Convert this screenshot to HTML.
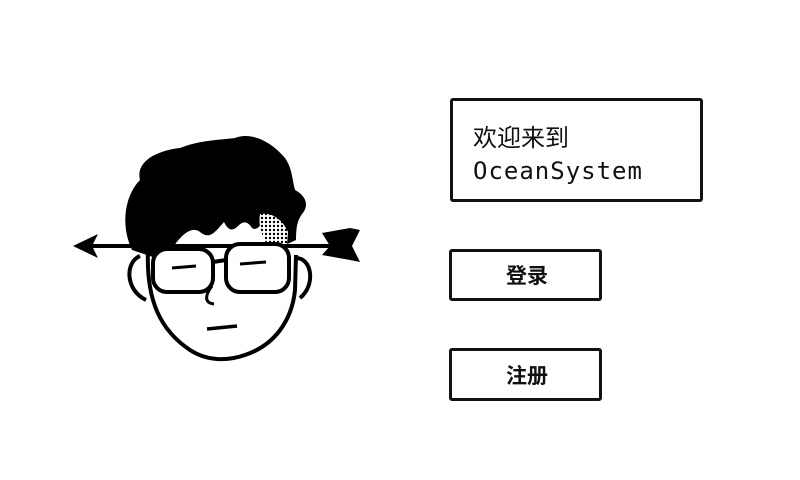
<!DOCTYPE html>
<html><head><meta charset="utf-8"><style>
html,body{margin:0;padding:0;background:#fff;width:800px;height:480px;overflow:hidden;position:relative}
.box{position:absolute;border:3px solid #111;border-radius:3px;box-sizing:border-box;background:#fff}
.t{position:absolute;color:#111}
</style></head><body>
<svg width="800" height="480" style="position:absolute;left:0;top:0">
<defs><pattern id="dots" width="4" height="4" patternUnits="userSpaceOnUse"><rect width="4" height="4" fill="#fff"/><circle cx="2" cy="2" r="1.2" fill="#000"/></pattern></defs>
<path d="M148 250 C146 300 160 330 190 350 C205 360 225 362 245 355 C275 345 292 320 295 290 L296 255" fill="#fff" stroke="#000" stroke-width="4"/>
<path d="M140 256 C125 262 125 290 146 300" fill="none" stroke="#000" stroke-width="4"/>
<path d="M296 258 C312 258 316 285 300 298" fill="none" stroke="#000" stroke-width="4"/>
<path d="M132 250 C120 225 125 195 140 180 C135 160 160 150 180 148 C200 140 220 140 235 138 C250 132 270 140 285 158 C292 168 292 178 295 190 C305 195 310 205 302 214 C298 220 296 225 296 240 L285 245 C280 230 275 220 268 215 C262 222 258 232 252 228 C248 222 244 220 238 226 C232 232 228 230 224 222 C215 232 210 240 200 232 C190 224 175 240 165 262 L150 256 Z" fill="#000"/>
<path d="M260 214 C270 212 282 218 288 232 L287 245 L268 246 C262 236 258 226 260 214 Z" fill="url(#dots)"/>
<line x1="78" y1="246" x2="345" y2="246" stroke="#000" stroke-width="4"/>
<path d="M73 246 L98 234 L92 246 L98 258 Z" fill="#000"/>
<path d="M322 233 L350 228 L360 230 L352 246 L360 262 L350 260 L322 255 L330 246 Z" fill="#000"/>
<rect x="153" y="249" width="60" height="43" rx="14" fill="#fff" stroke="#000" stroke-width="4"/>
<rect x="226" y="244" width="63" height="48" rx="14" fill="#fff" stroke="#000" stroke-width="4"/>
<path d="M213 262 L226 260" stroke="#000" stroke-width="4"/>
<path d="M172 268 L196 266 M240 264 L266 262" stroke="#000" stroke-width="3"/>
<path d="M212 286 C205 295 204 303 214 304" fill="none" stroke="#000" stroke-width="3"/>
<path d="M207 329 L237 326" stroke="#000" stroke-width="3.5"/>
</svg>
<div class="box" style="left:450px;top:98px;width:253px;height:104px"></div>
<div class="t" style="left:473px;top:118px;font:24px 'Liberation Sans','Noto Sans CJK SC',sans-serif">欢迎来到</div>
<div class="t" style="left:473px;top:157px;font:24px 'DejaVu Sans Mono','Liberation Mono',monospace;letter-spacing:1px">OceanSystem</div>
<div class="box" style="left:449px;top:249px;width:153px;height:52px"></div>
<div class="t" style="left:449px;top:260px;width:156px;text-align:center;font:bold 21px 'Noto Sans CJK SC',sans-serif">登录</div>
<div class="box" style="left:449px;top:348px;width:153px;height:53px"></div>
<div class="t" style="left:449px;top:360px;width:156px;text-align:center;font:bold 21px 'Noto Sans CJK SC',sans-serif">注册</div>
</body></html>
